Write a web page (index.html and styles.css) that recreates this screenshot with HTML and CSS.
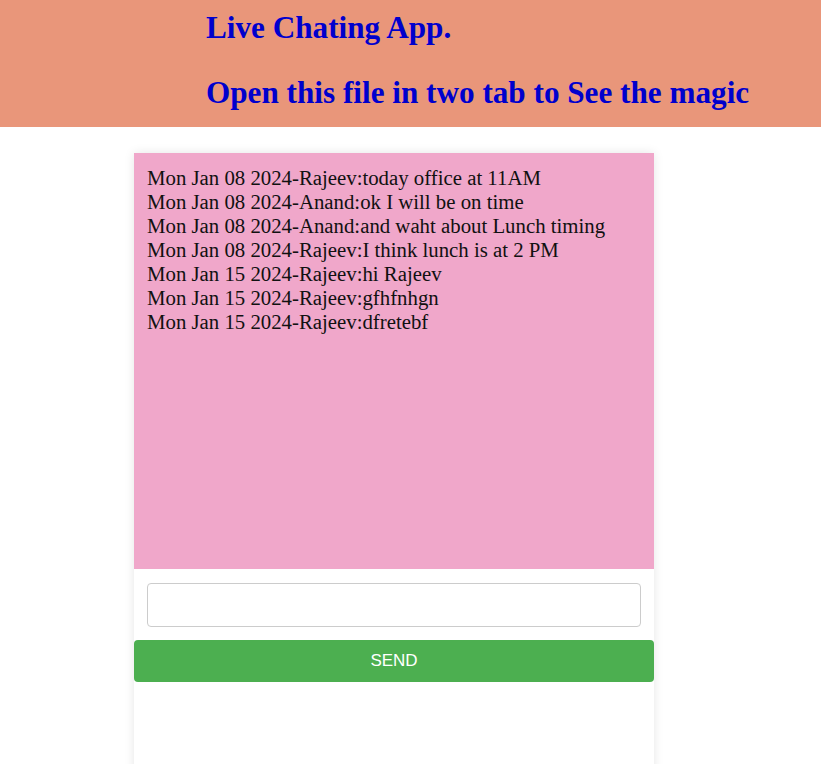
FILE: index.html
```html
<!DOCTYPE html>
<html>
<head>
<meta charset="utf-8">
<title>Live Chating App</title>
<link rel="stylesheet" href="styles.css">
</head>
<body>
<header class="header">
  <h1 class="title">Live Chating App.</h1>
  <h1 class="title title-second">Open this file in two tab to See the magic</h1>
</header>
<main class="chat">
  <div class="messages">
    <div>Mon Jan 08 2024-Rajeev:today office at 11AM</div>
    <div>Mon Jan 08 2024-Anand:ok I will be on time</div>
    <div>Mon Jan 08 2024-Anand:and waht about Lunch timing</div>
    <div>Mon Jan 08 2024-Rajeev:I think lunch is at 2 PM</div>
    <div>Mon Jan 15 2024-Rajeev:hi Rajeev</div>
    <div>Mon Jan 15 2024-Rajeev:gfhfnhgn</div>
    <div>Mon Jan 15 2024-Rajeev:dfretebf</div>
  </div>
  <div class="composer">
    <input class="msg-input" type="text">
  </div>
  <button class="send">SEND</button>
</main>
</body>
</html>
```
FILE: styles.css
```css
html, body {
  margin: 0;
  padding: 0;
  background: #ffffff;
}
body {
  font-family: "Liberation Serif", "Times New Roman", serif;
  overflow: hidden;
}
.header {
  background: #e9967a;
  padding: 10px 0 17px 206px;
}
.title {
  margin: 0;
  color: #0000cd;
  font-size: 31.2px;
  font-weight: bold;
  line-height: 35px;
}
.title-second {
  margin-top: 30px;
}
.chat {
  width: 520px;
  height: 640px;
  margin: 26px 0 0 134px;
  background: #ffffff;
  box-shadow: 0 0 10px rgba(0, 0, 0, 0.1);
  display: flex;
  flex-direction: column;
}
.messages {
  height: 416px;
  box-sizing: border-box;
  background: #f0a7ca;
  padding: 13px 13px;
  font-size: 20.8px;
  line-height: 24px;
  color: #111;
}
.composer {
  padding: 14px 13px 13px;
}
.msg-input {
  display: block;
  width: 100%;
  box-sizing: border-box;
  height: 44px;
  border: 1px solid #cccccc;
  border-radius: 4px;
  padding: 0 10px;
  font-size: 16px;
  outline: none;
}
.send {
  display: block;
  width: 100%;
  height: 42px;
  border: none;
  border-radius: 4px;
  background: #4caf50;
  color: #ffffff;
  font-family: "Liberation Sans", Arial, sans-serif;
  font-size: 17px;
  padding: 0;
  cursor: pointer;
}
```
